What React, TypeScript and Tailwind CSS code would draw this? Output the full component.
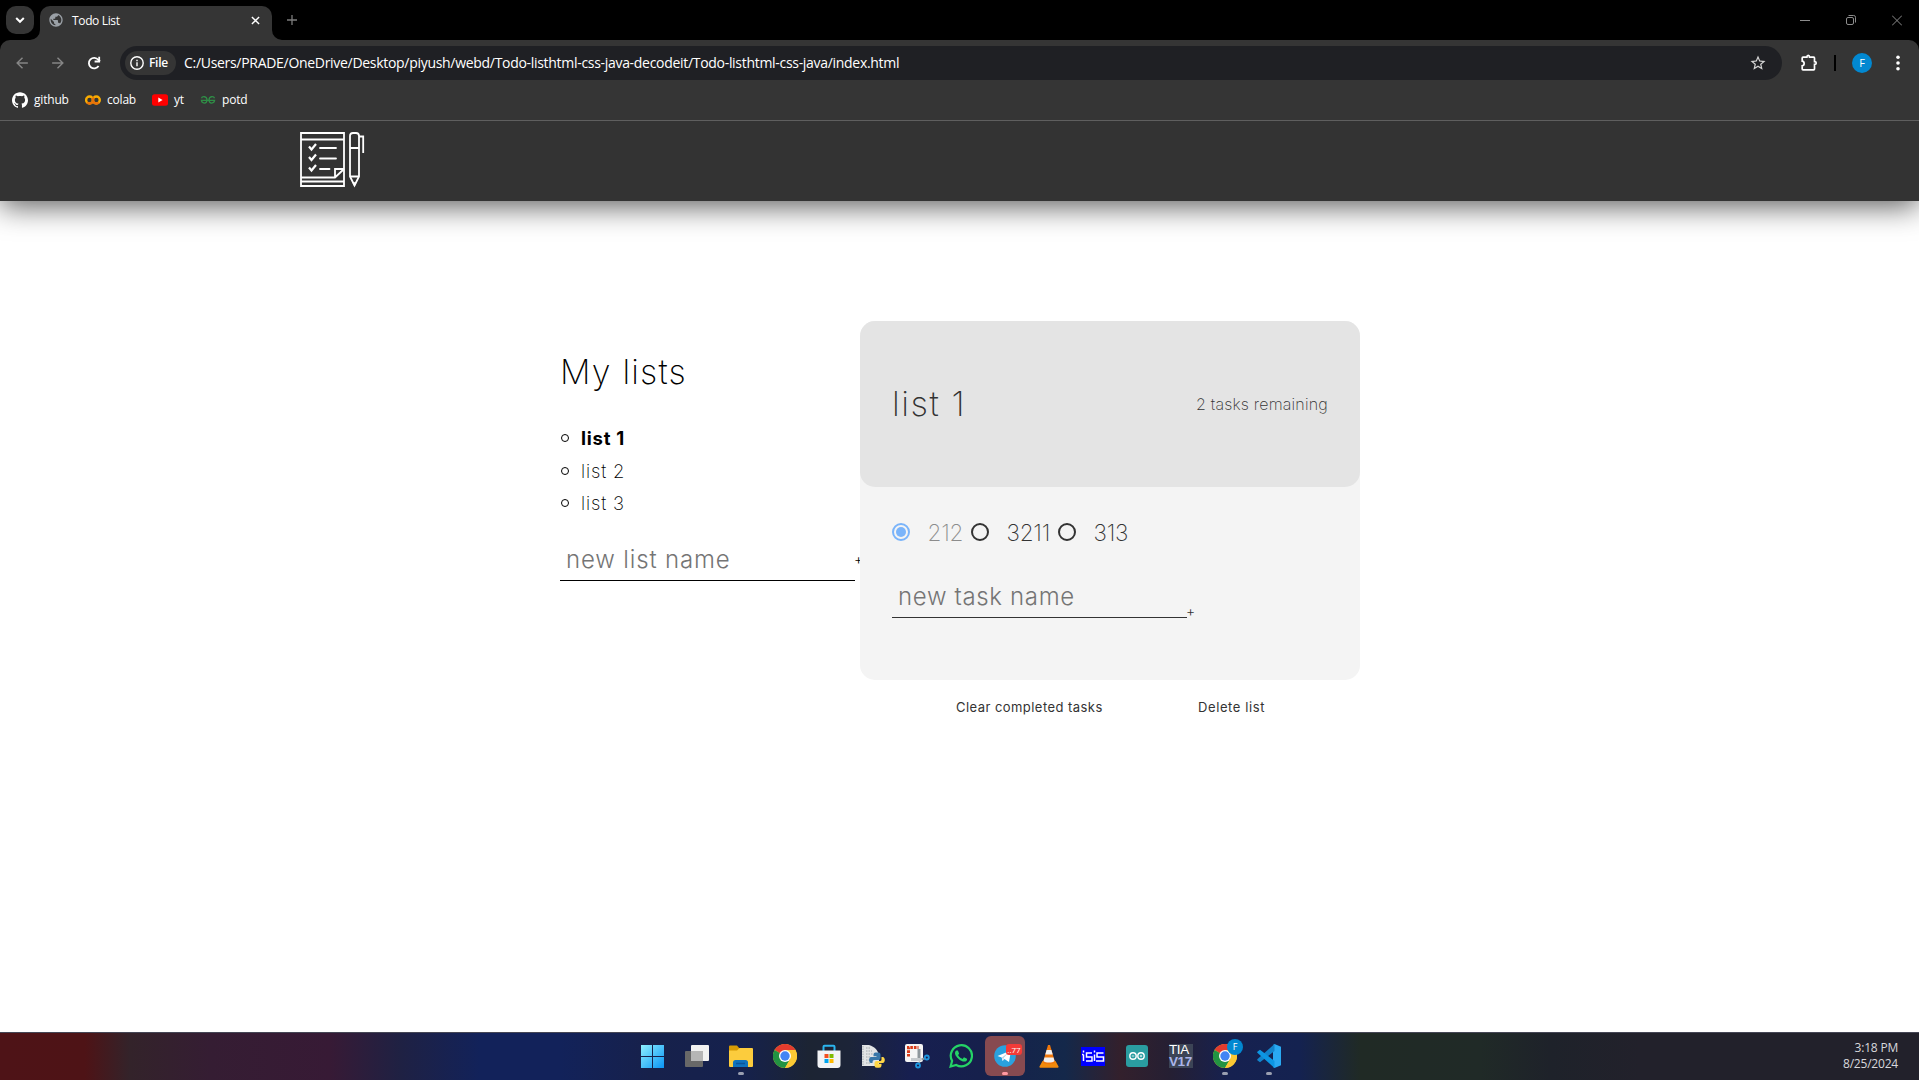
import React from "react";
import { SiGithub } from "react-icons/si";
import { MdStarBorder, MdArrowBack, MdArrowForward, MdPublic } from "react-icons/md";

function TabStrip() {
  return (
    <div className="flex h-10 items-start bg-black pl-1.5 pt-1.5">
      <button className="flex size-7 items-center justify-center rounded-[10px] bg-[#353535]">
        <svg viewBox="0 0 28 28" className="size-7" fill="none" stroke="#fff" strokeWidth="2">
          <path d="M10.2 12l3.8 3.8 3.8-3.8" />
        </svg>
      </button>
      <div className="relative ml-1.5 flex h-[34px] w-[232px] items-center rounded-t-[10px] bg-[#353535] pb-1.5 pl-2">
        <svg viewBox="0 0 10 10" className="absolute -left-2.5 bottom-0 size-2.5" fill="#353535"><path d="M10 0V10H0A10 10 0 0 0 10 0Z" /></svg>
        <svg viewBox="0 0 10 10" className="absolute -right-2.5 bottom-0 size-2.5" fill="#353535"><path d="M0 0V10H10A10 10 0 0 1 0 0Z" /></svg>
        <MdPublic className="size-4 text-[#9aa0a6]" />
        <span className="ml-2 w-[170px] pt-px text-xs tracking-[-0.35px] text-white">Todo List</span>
        <svg viewBox="0 0 10 10" className="ml-[9px] size-[9px]" stroke="#fff" strokeWidth="1.6"><path d="M1 1l8 8M9 1l-8 8" /></svg>
      </div>
      <svg viewBox="0 0 10 10" className="ml-[15px] mt-[9px] size-2.5" stroke="#7c7c7c" strokeWidth="1.3"><path d="M5 0v10M0 5h10" /></svg>
      <div className="ml-auto mr-[17px] mt-2 flex items-center gap-9">
        <svg viewBox="0 0 10 12" className="h-3 w-2.5" stroke="#8c8c8c"><path d="M0 6.5h10" /></svg>
        <svg viewBox="0 0 10 12" className="h-3 w-2.5 overflow-visible" stroke="#8c8c8c" fill="none">
          <rect x="0.5" y="3.5" width="7" height="7" rx="1.5" /><path d="M2.5 1.5h5.2a1.8 1.8 0 0 1 1.8 1.8v5.2" />
        </svg>
        <svg viewBox="0 0 10 12" className="h-3 w-2.5" stroke="#8c8c8c"><path d="M0 1.5l10 10M10 1.5l-10 10" /></svg>
      </div>
    </div>
  );
}

function Toolbar() {
  return (
    <div className="bg-black">
      <div className="flex h-[46px] items-center rounded-t-[10px] bg-[#353535] pl-3">
        <MdArrowBack className="size-5 scale-[.88] text-[#858585]" />
        <MdArrowForward className="ml-4 size-5 scale-[.88] text-[#858585]" />
        <svg viewBox="0 0 14 14" className="ml-[19px] size-3.5" fill="none" stroke="#fff" strokeWidth="1.8">
          <path d="M11.6 10.1A5.3 5.3 0 1 1 11.3 3.8L13 5.2" /><path d="M12.2 .8v4.7H7.6" />
        </svg>
        <div className="ml-[19px] flex h-[34px] w-[1662px] items-center rounded-full bg-[#1f2024] px-[5px]">
          <div className="flex h-6 w-[51px] items-center rounded-full bg-[#353535] pl-[5px]">
            <svg viewBox="0 0 14 14" className="size-3.5" fill="none" stroke="#fff" strokeWidth="1.4">
              <circle cx="7" cy="7" r="6.2" /><path d="M7 6.2v4M7 3.7v1.5" />
            </svg>
            <span className="ml-[5px] text-xs font-semibold tracking-[-0.3px] text-white">File</span>
          </div>
          <span className="ml-2 whitespace-nowrap text-sm tracking-[-0.3px] text-white">
            C:/Users/PRADE/OneDrive/Desktop/piyush/webd/Todo-listhtml-css-java-decodeit/Todo-listhtml-css-java/index.html
          </span>
          <MdStarBorder className="ml-auto mr-2.5 size-[18px] text-[#d5d5d5]" />
        </div>
        <svg viewBox="0 0 18 18" className="ml-[18px] size-[18px]" fill="none" stroke="#fff" strokeWidth="1.7">
          <path d="M3 3.2h3.9c0-2.4 2.6-2.4 2.6 0h4.2a.8.8 0 0 1 .8.8v3.6c2.3 0 2.3 2.8 0 2.8V15a.8.8 0 0 1-.8.8H3a.8.8 0 0 1-.8-.8v-3.2c2.6-.4 2.6-4.2 0-4.6V4a.8.8 0 0 1 .8-.8Z" />
        </svg>
        <div className="ml-4 h-4 w-0.5 bg-black" />
        <div className="ml-4 flex size-5 items-center justify-center rounded-full bg-[#0288d1] text-[11px] text-white">F</div>
        <svg viewBox="0 0 4 16" className="ml-6 h-4 w-1" fill="#fff"><circle cx="2" cy="2.2" r="1.8" /><circle cx="2" cy="8" r="1.8" /><circle cx="2" cy="13.8" r="1.8" /></svg>
      </div>
    </div>
  );
}

function Bookmarks() {
  return (
    <div className="relative z-20 flex h-[35px] items-start border-b border-[#5f5f5f] bg-[#353535] pl-3 pt-1.5 text-xs leading-4 tracking-[-0.2px] text-white">
      <SiGithub className="size-4" />
      <span className="ml-1.5 w-[51px]">github</span>
      <svg viewBox="0 0 16 16" className="size-4" fill="none" strokeWidth="2.4">
        <circle cx="11.3" cy="8" r="3.5" stroke="#f9ab00" /><circle cx="4.6" cy="8" r="3.5" stroke="#f9ab00" />
        <path d="M2.1 10.5a3.5 3.5 0 0 0 5-.1M8.9 5.5a3.5 3.5 0 1 0 4.9 5" stroke="#e8710a" />
      </svg>
      <span className="ml-1.5 w-[45px]">colab</span>
      <svg viewBox="0 0 16 16" className="size-4"><rect y="2.3" width="16" height="11.4" rx="2.5" fill="#f00" /><path d="M6.3 5.6L10.6 8 6.3 10.4Z" fill="#fff" /></svg>
      <span className="ml-1.5 w-[26px]">yt</span>
      <svg viewBox="0 0 16 16" className="size-4" fill="none" stroke="#2f8d46" strokeWidth="1.3">
        <path d="M1.5 6.3C2.2 3.9 7 4 7 8c0 4-5.2 4-5.6.3H14.6C14.2 12 9 12 9 8c0-4 4.8-4.1 5.5-1.7" />
      </svg>
      <span className="ml-1.5">potd</span>
    </div>
  );
}

function PageHeader() {
  return (
    <header className="relative z-10 h-20 bg-[#333] pl-[299px] pt-[11px] shadow-[0_5px_30px_rgba(0,0,0,0.66)]">
      <svg viewBox="0 0 66 56" className="h-14 w-[66px]" fill="none" stroke="#fff" strokeWidth="1.8">
        <path d="M2 1h43v53H2Z" /><path d="M2 7.5h43" />
        <path d="M2 45.5h34L45 37M2 49.5h43M36 45.5V37h9" />
        <path d="M10 14.5l2.5 3L17 12M10 25l2.5 3 4.5-5.5M10 35.5l2.5 3 4.5-5.5" strokeWidth="2.2" />
        <path d="M21 16h16M21 26.5h16M21 37h9.5" strokeLinecap="round" />
        <path d="M51 44.5V4a3 3 0 0 1 3-3h3a3 3 0 0 1 3 3v40.5l-4.5 9Z" /><path d="M51 16h9M51 44.5h9M60 4.5h4.2V21" />
        <path d="M53.8 50.5h3.4l-1.7 3.5Z" fill="#fff" strokeWidth=".6" />
      </svg>
    </header>
  );
}

function ListItem({ children, bold }: { children: string; bold?: boolean }) {
  return (
    <li className="flex h-[32.5px] items-center">
      <span className="ml-px size-2 rounded-full border-[1.3px] border-black" />
      <span className={bold ? "ml-3 text-[18.5px] font-bold tracking-[0.75px]" : "ml-3 text-[18.5px] font-extralight tracking-[0.85px]"}>{children}</span>
    </li>
  );
}

function Radio({ label, done, width }: { label: string; done?: boolean; width: string }) {
  return (
    <label className={`flex items-center ${width}`}>
      <span className={done ? "flex size-[18px] items-center justify-center rounded-full border-2 border-[#7ab4fa]" : "size-[18px] rounded-full border-2 border-[#333]"}>
        {done && <span className="size-2.5 rounded-full bg-[#7ab4fa]" />}
      </span>
      <span className={done ? "ml-[17.5px] mt-0.5 text-[22.5px] font-extralight tracking-[-0.2px] text-[#8c8c8c]" : "ml-[17.5px] mt-0.5 text-[22.5px] font-extralight tracking-[-0.2px]"}>{label}</span>
    </label>
  );
}

function Content() {
  return (
    <main className="flex h-[831px] bg-white pl-[560px] font-['Inter',sans-serif] text-[#333]">
      <section className="w-[300px] overflow-hidden pt-[146px] text-black">
        <h2 className="text-[34px] font-extralight leading-[50px] tracking-[1.2px]">My lists</h2>
        <ul className="mt-[25px] leading-none">
          <ListItem bold>list 1</ListItem>
          <ListItem>list 2</ListItem>
          <ListItem>list 3</ListItem>
        </ul>
        <div className="mt-[20.5px] flex h-[41px] w-[310px] items-start">
          <div className="h-[41px] w-[295px] shrink-0 border-b border-black pl-1.5 text-[24px] font-[350] leading-[39px] tracking-[0.85px] text-[#757575]">new list name</div>
          <span className="-ml-px text-sm font-light leading-[38px]">+</span>
        </div>
      </section>
      <section className="w-[500px] pt-[120px]">
        <div className="h-[359px] rounded-[15px] bg-[#f4f4f4]">
          <div className="flex h-[166px] items-center justify-between rounded-[15px] bg-[#e4e4e4] px-8">
            <h2 className="text-[34.5px] font-extralight tracking-[1.5px]">list 1</h2>
            <p className="-mt-px text-[16px] font-extralight tracking-[0.2px]">2 tasks remaining</p>
          </div>
          <div className="pl-8 pt-[29px]">
            <div className="flex h-8 items-center">
              <Radio label="212" done width="w-[79px]" />
              <Radio label="3211" width="w-[87px]" />
              <Radio label="313" width="w-[80px]" />
            </div>
            <div className="mt-[29px] flex h-[41px]">
              <div className="h-[41px] w-[295px] border-b border-[#333] pl-1.5 text-[24px] font-[350] leading-[39px] tracking-[0.65px] text-[#757575]">new task name</div>
              <span className="-ml-px pt-6 text-sm font-light leading-5">+</span>
            </div>
          </div>
        </div>
        <div className="flex pl-24 pt-[17px] text-[13px] leading-5">
          <span className="w-[242px] tracking-[0.45px]">Clear completed tasks</span>
          <span className="tracking-[0.6px]">Delete list</span>
        </div>
      </section>
    </main>
  );
}

function ChromeLogo() {
  return (
    <svg viewBox="0 0 24 24" className="size-6">
      <circle cx="12" cy="12" r="12" fill="#fcc934" />
      <path d="M12 12L1.6 6A12 12 0 0 1 22.4 6Z" fill="#e33b2e" />
      <path d="M1.6 6A12 12 0 0 0 12 24l5.2-9L12 12Z" fill="#229342" />
      <path d="M12 6h10.4A12 12 0 0 1 12 24l5.2-9Z" fill="#fcc934" />
      <circle cx="12" cy="12" r="6" fill="#fff" /><circle cx="12" cy="12" r="4.7" fill="#4285f4" />
    </svg>
  );
}

function TaskIcon({ children, running }: { children: React.ReactNode; running?: boolean }) {
  return (
    <div className="relative flex h-[47px] w-11 items-center justify-center pb-px">
      {children}
      {running && <span className="absolute bottom-[5px] left-[19px] h-[3px] w-1.5 rounded-full bg-[#9a9fb0]" />}
    </div>
  );
}

function Taskbar() {
  return (
    <footer className="relative flex h-12 border-t border-[#454655] bg-[linear-gradient(90deg,#4e1317_0,#4e1316_85px,#33232a_130px,#351d33_210px,#371a35_330px,#1f2143_400px,#12225a_480px,#12225a_560px,#17214b_650px,#15214d_740px,#1c2433_810px,#1c2438_850px,#171f50_910px,#16204c_980px,#14284a_1065px,#33202c_1120px,#251f33_1170px,#162150_1230px,#142250_1300px,#202a25_1360px,#202a27_1480px,#1e222a_1550px,#22212b_1640px,#22212b_1919px)]">
      <div className="flex pl-[631px]">
        <TaskIcon>
          <svg viewBox="0 0 23 23" className="mr-px size-[23px]"><defs><linearGradient id="win" x1="0" y1="0" x2="1" y2="1"><stop stopColor="#8df0ff" /><stop offset="1" stopColor="#0a94f5" /></linearGradient></defs><path d="M0 0h11v11H0ZM12 0h11v11H12ZM0 12h11v11H0ZM12 12h11v11H12Z" fill="url(#win)" /></svg>
        </TaskIcon>
        <TaskIcon>
          <svg viewBox="0 0 24 24" className="size-6"><rect x="6" y="1" width="18" height="16" rx="1" fill="#f1f1f1" /><rect y="7" width="18" height="16" rx="1" fill="#686868" /><path d="M6 7h12v10H6Z" fill="#b5b5b5" /></svg>
        </TaskIcon>
        <TaskIcon running>
          <svg viewBox="0 0 24 24" className="size-6"><path d="M0 2.5a1 1 0 0 1 1-1h7l2.5 3V8H0Z" fill="#d79b05" /><path d="M0 6.5h8l2.5-2.5H23a1 1 0 0 1 1 1v17a1 1 0 0 1-1 1H1a1 1 0 0 1-1-1Z" fill="#fccc3d" /><path d="M4 23v-4.5a2.5 2.5 0 0 1 2.5-2.5h10a2.5 2.5 0 0 1 2.5 2.5V23Z" fill="#0f72be" /><path d="M7 19.5h9" stroke="#0a549b" strokeWidth="1.5" /></svg>
        </TaskIcon>
        <TaskIcon><ChromeLogo /></TaskIcon>
        <TaskIcon>
          <svg viewBox="0 0 24 24" className="size-6"><path d="M6.5 7V2.8a1 1 0 0 1 1-1h9a1 1 0 0 1 1 1V7" fill="none" stroke="#2bb5ee" strokeWidth="2" /><path d="M.5 6.5h23V21a3 3 0 0 1-3 3h-17a3 3 0 0 1-3-3Z" fill="#f2f3f5" /><path d="M7.5 10h4v4h-4Z" fill="#f25022" /><path d="M12.5 10h4v4h-4Z" fill="#7fba00" /><path d="M7.5 15h4v4h-4Z" fill="#00a4ef" /><path d="M12.5 15h4v4h-4Z" fill="#ffb900" /></svg>
        </TaskIcon>
        <TaskIcon>
          <svg viewBox="0 0 24 24" className="size-6"><path d="M1 1h7c6 1.5 9 6 10 10v11H1Z" fill="#e2e4e5" /><path d="M2 2v20M5 4h4M5 7h6M5 10h7M5 13h4M5 16h4M5 19h4" stroke="#a2a9ad" strokeDasharray="1.5 1" /><path d="M12.5 10.5a2 2 0 0 1 2-2h3a2 2 0 0 1 2 2V14a2 2 0 0 1-2 2h-4a2 2 0 0 0-2 2v1h-1.5c-2.5 0-2.5-6 0-6h5.5v-.8h-3Z" fill="#3776a8" /><path d="M20.5 13h1.2c2.8 0 2.8 6 0 6h-4.5v.8h3.3v1.7a2.3 2.3 0 0 1-2.3 2.3h-2.4a2.3 2.3 0 0 1-2.3-2.3V19a2 2 0 0 1 2-2h3.5a1.5 1.5 0 0 0 1.5-1.5Z" fill="#ffd646" /></svg>
        </TaskIcon>
        <TaskIcon>
          <svg viewBox="0 0 24 24" className="size-6 overflow-visible"><rect width="18" height="18" rx="2" fill="#f5f5f5" /><path d="M3.5 12.5V3.5h10" fill="none" stroke="#d83b1a" strokeWidth="3" strokeDasharray="2.6 1" /><path d="M12.5 5h3v12h-3Z" fill="#8f979c" /><path d="M6 15.5h10" stroke="#c6cacd" strokeWidth="3" /><path d="M15 18l-2 1.5M16.5 15.5l4-1.5" stroke="#8f979c" strokeWidth="2" /><circle cx="13" cy="21.5" r="2" fill="none" stroke="#1e96e0" strokeWidth="1.8" /><circle cx="21.8" cy="13.5" r="2" fill="none" stroke="#1e96e0" strokeWidth="1.8" /></svg>
        </TaskIcon>
        <TaskIcon>
          <svg viewBox="0 0 24 24" className="size-6" fill="#25d366"><path d="M17.472 14.382c-.297-.149-1.758-.867-2.03-.967-.273-.099-.471-.148-.67.15-.197.297-.767.966-.94 1.164-.173.199-.347.223-.644.075-.297-.15-1.255-.463-2.39-1.475-.883-.788-1.48-1.761-1.653-2.059-.173-.297-.018-.458.13-.606.134-.133.298-.347.446-.52.149-.174.198-.298.298-.497.099-.198.05-.371-.025-.52-.075-.149-.669-1.612-.916-2.207-.242-.579-.487-.5-.669-.51-.173-.008-.371-.01-.57-.01-.198 0-.52.074-.792.372-.272.297-1.04 1.016-1.04 2.479 0 1.462 1.065 2.875 1.213 3.074.149.198 2.096 3.2 5.077 4.487.709.306 1.262.489 1.694.625.712.227 1.36.195 1.871.118.571-.085 1.758-.719 2.006-1.413.248-.694.248-1.289.173-1.413-.074-.124-.272-.198-.57-.347" /><path fill="none" stroke="#25d366" strokeWidth="2.2" d="M1.6 22.5l1.5-5.6a10.6 10.6 0 1 1 4.1 4.1Z" /></svg>
        </TaskIcon>
        <div className="relative mx-0.5 my-[3px] flex h-10 w-10 items-center justify-center rounded-md bg-[#874a50]">
          <svg viewBox="0 0 22 22" className="mr-px size-[22px]"><circle cx="11" cy="11" r="10.8" fill="#2aa1de" /><path d="M3.5 11L17 5.5l-2 11.5-4.5-3-2 2-.8-3.5Z" fill="#fff" /><path d="M8 12.5L14.5 7.5 9.5 13v2.5Z" fill="#b8cfe0" /></svg>
          <span className="absolute right-[3px] top-2 h-[11px] w-4 rounded-[3px] bg-[#f33b38] text-center text-[8px] leading-[11px] text-white">..77</span>
          <span className="absolute bottom-px left-[17px] h-[3px] w-1.5 rounded-full bg-[#ff98a2]" />
        </div>
        <TaskIcon>
          <svg viewBox="0 0 20 24" className="h-6 w-5"><path d="M3.5 17h13l3 5.5a.8.8 0 0 1-.7 1.2H1.2a.8.8 0 0 1-.7-1.2Z" fill="#f28a0c" /><path d="M9 1h2l5 17c-1 3-11 3-12 0Z" fill="#f0780c" /><path d="M7.6 6h4.8l1.3 4.5H6.3ZM5.5 13.5h9l1 3.5c-2 2-9 2-11 0Z" fill="#f1f1f1" /></svg>
        </TaskIcon>
        <TaskIcon>
          <svg viewBox="0 0 24 19" className="h-[19px] w-6" fill="none" stroke="#fff" strokeWidth="1.5"><path d="M0 0h24v19H0Z" fill="#0000ff" stroke="none" /><path d="M2.5 7.5V14M1 7.5h1.5M2.5 3.5v2M11 6H5.5v4H11v4H5M13.5 7.5V14M13.5 3.5v2M22.5 6H16v4h6.5v4H15" /></svg>
        </TaskIcon>
        <TaskIcon>
          <svg viewBox="0 0 22 22" className="size-[22px]"><rect width="22" height="22" rx="3" fill="#2a9da1" /><g fill="none" stroke="#fff" strokeWidth="1.4"><circle cx="7" cy="11" r="3.2" /><circle cx="15" cy="11" r="3.2" /><path d="M5.8 11h2.4M13.8 11h2.4M15 9.8v2.4" strokeWidth=".8" /></g></svg>
        </TaskIcon>
        <TaskIcon>
          <div className="flex size-6 flex-col items-start whitespace-nowrap bg-[#3c4456] font-['Liberation_Sans',sans-serif] text-[13.5px] font-bold leading-[12px] tracking-[-0.4px]">
            <span className="font-normal text-white">TIA</span><span className="text-[#aab4ea]">V17</span>
          </div>
        </TaskIcon>
        <TaskIcon running>
          <ChromeLogo />
          <span className="absolute left-6 top-[6px] flex size-4 items-center justify-center rounded-full bg-[#0288d1] text-[9px] text-white">F</span>
        </TaskIcon>
        <TaskIcon running>
          <svg viewBox="0 0 24 24" className="size-6"><path d="M17.5 0L24 2.8v18.4L17.5 24l-1.5-1V1Z" fill="#29a9f2" /><path d="M17.5 0v7L3 18.3.6 16.6a1 1 0 0 1 0-1.5Z" fill="#1283cb" /><path d="M17.5 24v-7L3 5.7.6 7.4a1 1 0 0 0 0 1.5Z" fill="#0c96e3" /></svg>
        </TaskIcon>
      </div>
      <div className="ml-auto pr-[21px] pt-[7px] text-right text-xs leading-4 tracking-[-0.2px] text-[#d8d8dc]">
        <p>3:18 PM</p>
        <p>8/25/2024</p>
      </div>
    </footer>
  );
}

export default function App() {
  return (
    <div className="h-[1080px] w-[1919px] overflow-hidden bg-white font-['Open_Sans',sans-serif]">
      <TabStrip />
      <Toolbar />
      <Bookmarks />
      <PageHeader />
      <Content />
      <Taskbar />
    </div>
  );
}
